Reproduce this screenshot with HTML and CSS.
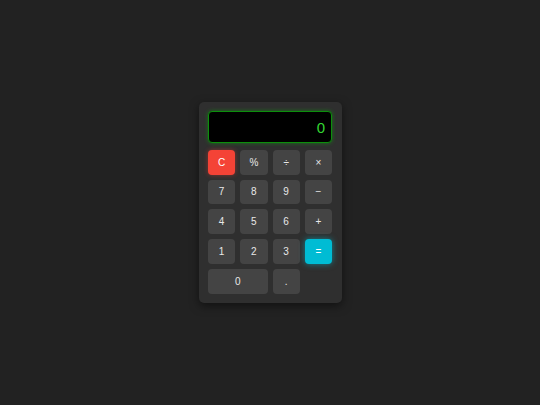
FILE: index.html
```html
<!DOCTYPE html>
<html>
<head>
<meta charset="utf-8">
<link rel="stylesheet" href="styles.css">
</head>
<body>
<div class="calc">
  <div class="display">0</div>
  <div class="keys">
    <div class="key clear">C</div>
    <div class="key">%</div>
    <div class="key">÷</div>
    <div class="key">×</div>
    <div class="key">7</div>
    <div class="key">8</div>
    <div class="key">9</div>
    <div class="key">−</div>
    <div class="key">4</div>
    <div class="key">5</div>
    <div class="key">6</div>
    <div class="key">+</div>
    <div class="key">1</div>
    <div class="key">2</div>
    <div class="key">3</div>
    <div class="key equals">=</div>
    <div class="key zero">0</div>
    <div class="key">.</div>
  </div>
</div>
</body>
</html>
```
FILE: styles.css
```css
html, body {
  margin: 0;
  padding: 0;
  height: 100%;
}
body {
  background: #222222;
  display: flex;
  align-items: center;
  justify-content: center;
  font-family: "Liberation Sans", Arial, sans-serif;
}
.calc {
  width: 124px;
  padding: 9.5px;
  background: #2f2f2f;
  border-radius: 5px;
  box-shadow: 0 3px 10px rgba(0, 0, 0, 0.5);
  display: flex;
  flex-direction: column;
  gap: 6.7px;
}
.display {
  box-sizing: border-box;
  height: 31.7px;
  background: #000;
  border: 1px solid #0c8f0c;
  border-radius: 4px;
  box-shadow: 0 0 4px rgba(0, 200, 0, 0.45);
  color: #33d633;
  font-family: "Liberation Sans", Arial, sans-serif;
  font-size: 15px;
  display: flex;
  align-items: center;
  justify-content: flex-end;
  padding: 0 6px 0 0;
}
.keys {
  display: grid;
  grid-template-columns: repeat(4, 1fr);
  grid-auto-rows: 24.75px;
  gap: 5px;
}
.key {
  background: #444444;
  color: #e8e8e8;
  border-radius: 4px;
  font-size: 10px;
  display: flex;
  align-items: center;
  justify-content: center;
}
.clear {
  background: #f44336;
  color: #fff;
  box-shadow: 0 0 5px rgba(244, 67, 54, 0.45);
}
.equals {
  background: #00bcd4;
  color: #fff;
  box-shadow: 0 0 6px rgba(0, 188, 212, 0.6);
}
.zero {
  grid-column: span 2;
}
```
